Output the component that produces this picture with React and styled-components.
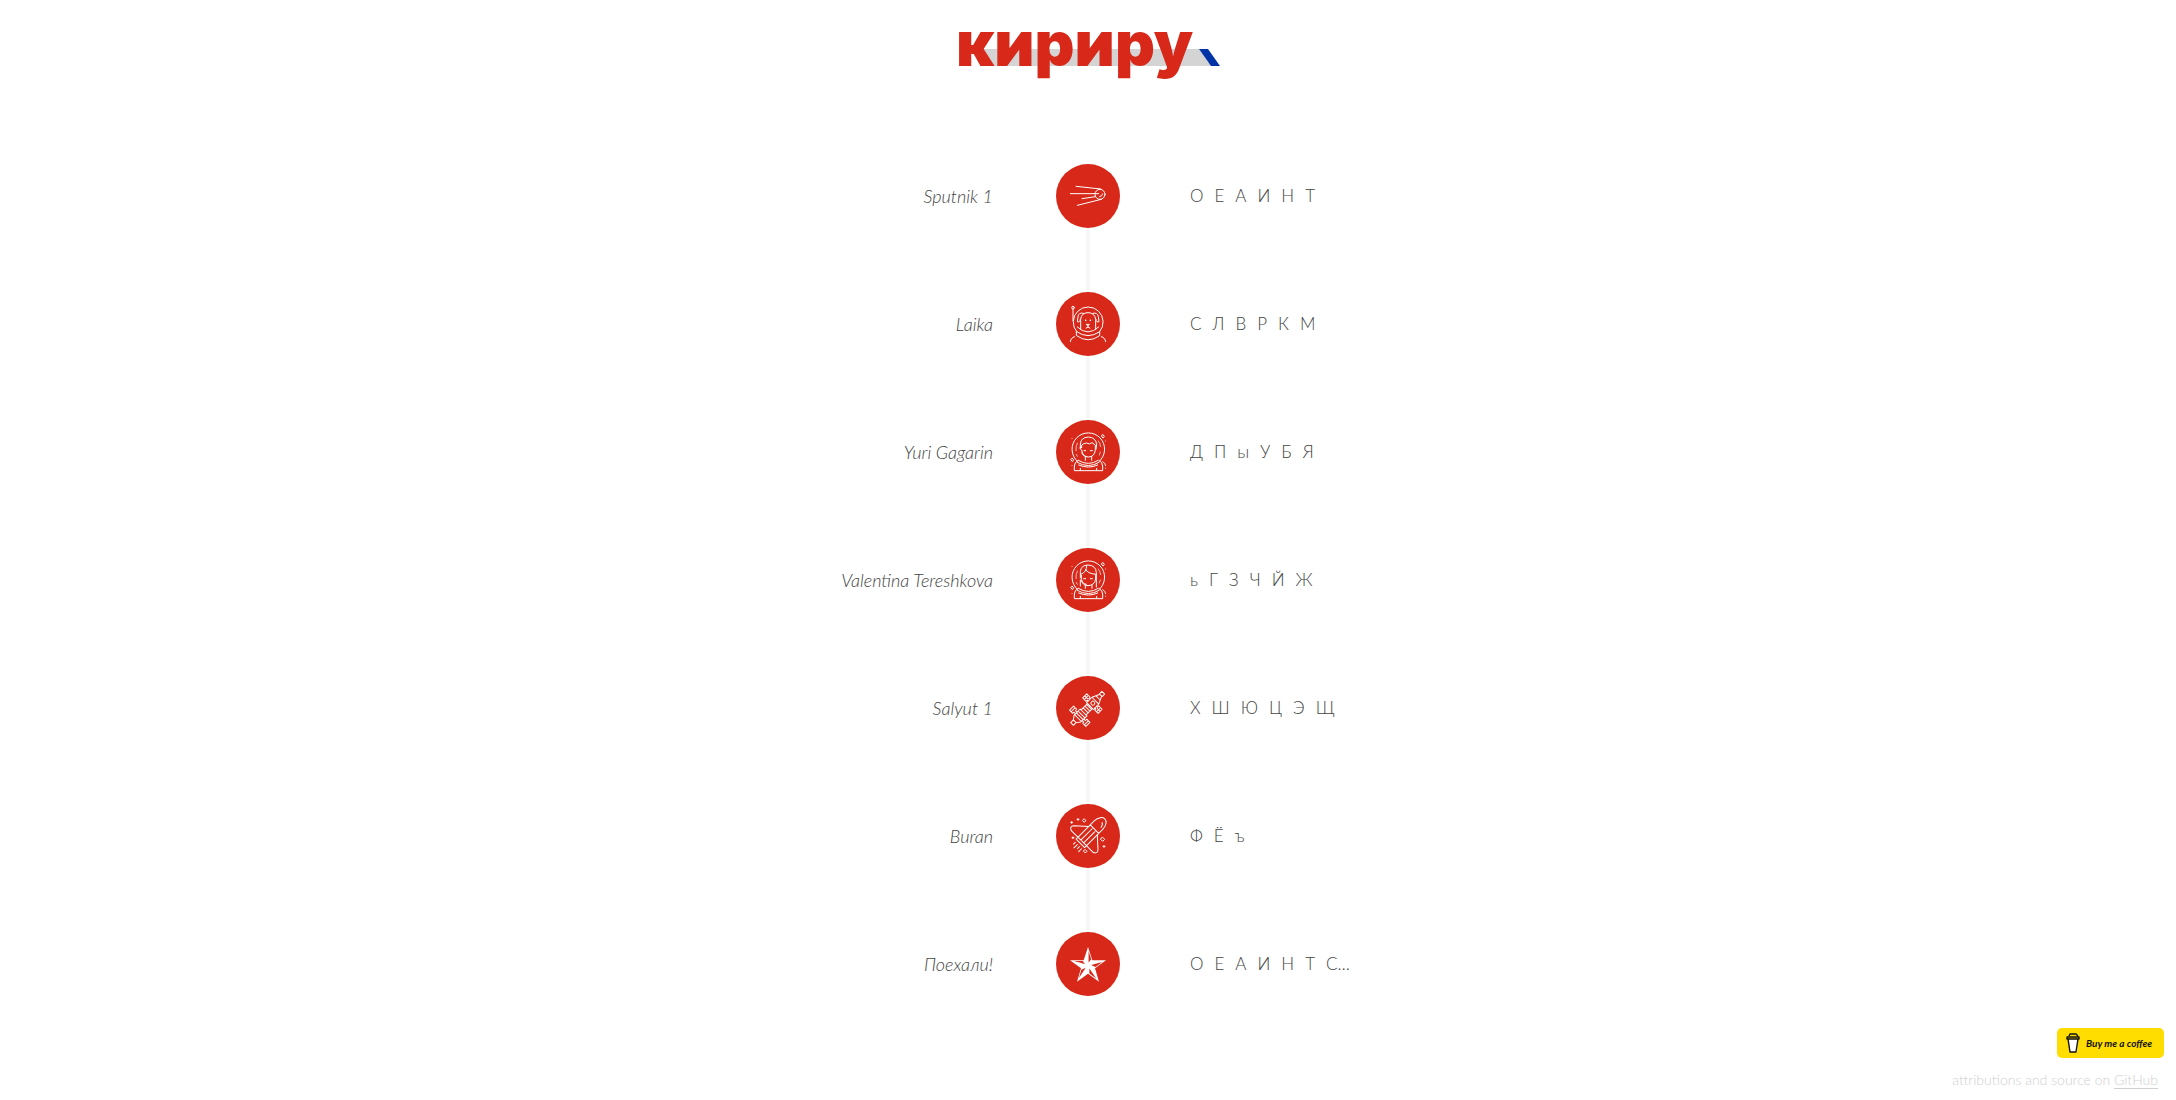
import React from "react";
import styled, { createGlobalStyle } from "styled-components";

const RED = "#d72819";

const GlobalStyle = createGlobalStyle`
  *, *::before, *::after { box-sizing: border-box; }
  body {
    margin: 0;
    background: #fff;
    color: #444;
    font-family: Lato, "Open Sans", sans-serif;
    font-weight: 300;
  }
`;

const Page = styled.div`
  display: flex;
  flex-direction: column;
  min-height: 100vh;
`;

const Header = styled.header`
  display: flex;
  justify-content: center;
  padding: 16px 0 0;
  height: 132px;
`;

const Logo = styled.h1`
  position: relative;
  isolation: isolate;
  margin: 0;
  width: 264px;
  height: 72px;
  color: ${RED};
  font-family: Inter, sans-serif;
  font-size: 62px;
  line-height: 56px;
  font-weight: 900;
`;

const LogoBand = styled.svg`
  position: absolute;
  z-index: -1;
  left: 0;
  top: 33px;
  width: 264px;
  height: 17px;
`;

const Timeline = styled.ol`
  display: flex;
  flex-direction: column;
  gap: 64px;
  margin: 0;
  padding: 32px 0;
  list-style: none;
`;

const Level = styled.li`
  position: relative;
  display: grid;
  grid-template-columns: 1fr 64px 1fr;
  align-items: center;

  &:not(:last-child)::after {
    content: "";
    position: absolute;
    left: calc(50% - 2px);
    top: 64px;
    width: 4px;
    height: 64px;
    background: #f7f7f7;
  }
`;

const Name = styled.a`
  justify-self: end;
  margin-right: 63px;
  color: inherit;
  font-size: 18px;
  line-height: 24px;
  font-style: italic;
  text-decoration: none;
`;

const Badge = styled.div`
  display: grid;
  place-items: center;
  width: 64px;
  height: 64px;
  border-radius: 50%;
  background: ${RED};
`;

const Icon = styled.svg`
  width: 36px;
  height: 36px;
  overflow: visible;
  fill: none;
  stroke: #fff;
  stroke-width: 3;
  stroke-linecap: round;
  stroke-linejoin: round;
`;

const Letters = styled.div`
  display: flex;
  gap: 11px;
  margin-left: 70px;
  font-size: 17px;
  line-height: 24px;
`;

const Footer = styled.footer`
  display: flex;
  flex-direction: column;
  align-items: flex-end;
  gap: 12px;
  padding-right: 12px;
`;

const Coffee = styled.a`
  display: flex;
  align-items: center;
  gap: 6px;
  width: 107px;
  height: 30px;
  padding-left: 9px;
  border-radius: 5px;
  background: #fd0;
  color: #111;
  font-size: 10px;
  font-weight: 700;
  font-style: italic;
  white-space: nowrap;
  text-decoration: none;
`;

const Cup = styled.svg`
  width: 14px;
  height: 20px;
  flex: none;
`;

const Credits = styled.p`
  margin: 0;
  padding-right: 6px;
  color: #d0d0d0;
  font-size: 14px;
  line-height: 20px;

  a { color: inherit; text-underline-offset: 3px; }
`;

const Sputnik = () => (
  <Icon viewBox="60 54 108 108" aria-hidden="true">
    <circle cx="150" cy="103" r="15" />
    <path d="M78 79L152 87M61 101H146M96 116L136 110M82 136L154 118M158 102q-1 7-9 8" />
  </Icon>
);

const Laika = () => (
  <Icon viewBox="60 54 108 108" aria-hidden="true">
    <circle cx="69" cy="59" r="4" />
    <path d="M69 63V98" />
    <path d="M80 131A45 45 0 1 1 149 131" />
    <path d="M82 117q32 30 64 0M80 131q34 24 69 0v12q-35 25-69 0z" />
    <path d="M92 124V94q2-20 22-20t23 20v30M100 76q-14-4-16 10l-2 15q8 4 9-7M129 76q14-4 16 10l2 15q-8 4-9-7" />
    <path d="M107 97h.1M121 97h.1" strokeWidth="5" />
    <path d="M110 109h8l-4 4zM114 113v4M108 120q6-7 12 0" />
    <path d="M61 161q1-12 13-15M167 161q-1-12-13-15" />
  </Icon>
);

const CosmonautSuit = () => (
  <>
    <path d="M82 136A49 49 0 1 1 148 136" />
    <path d="M82 81q-5 10-4 23M145 75q6 7 7 17M79 115l3 6M151 108l-3 9" strokeWidth="2" />
    <path d="M85 133q30 19 60 0M82 139q33 20 65 0M86 147q29 13 57 0" />
    <path d="M83 134q-9 4-10 16v14h85v-14q-1-12-10-16M91 157v7M140 157v7" />
    <path d="M159 56l4 5-4 5-4-5zM67 127l4 5-4 5-4-5z" />
    <path d="M66 67h.1M166 75h.1M66 149h.1M158 137q8 3 9 12M167 157h.1" strokeWidth="2.5" />
  </>
);

const Gagarin = () => (
  <Icon viewBox="60 54 108 108" aria-hidden="true">
    <CosmonautSuit />
    <path d="M91 97V84q2-20 24-21 22 1 25 22l-2 15" />
    <path d="M95 95V87q7-6 15-6 8 6 16-1l10 7v14q-2 22-21 22-18-1-20-21-8-4-4-9l4 2" />
    <path d="M102 104h5M121 104h6M96 109q0 10 13 13M106 123v10M125 122v11" />
  </Icon>
);

const Tereshkova = () => (
  <Icon viewBox="60 54 108 108" aria-hidden="true">
    <CosmonautSuit />
    <path d="M91 101V83q2-20 23-20 24 1 25 23v43M91 108v18" />
    <path d="M110 65q0 20-17 26M107 76q5 13 31 15" />
    <path d="M94 94v13q3 18 20 18 20-1 23-20V94M101 104h6M121 104h6M96 110q1 9 13 11M106 123v10M126 122v11" />
  </Icon>
);

const Salyut = () => (
  <Icon viewBox="60 54 108 108" aria-hidden="true">
    <g transform="translate(115 107) rotate(-45) scale(0.96)">
      <path d="M-72-6h12v12h-12zM-60-6l12-9h27v30h-27l-12-9M-46-15v30M-38-15v30M-30-15v30" />
      <path d="M-21-11H7V11h-28M-12-11V11M-4-11V11M3-11V11" />
      <path d="M7-15h24l24 11v8L31 15H7zM55-6h11v12H55zM31-15v30M43-8v16" />
      <circle cx="20" cy="0" r="6" />
      <path d="M-42-15v-7h-5v-14h18v14h-6v7M-42 15v7h-5v14h18V22h-6v-7M-47-29h18M-47 29h18" />
      <path d="M14-15v-4H9v-15h18v15h-6v4M14 15v4H9v15h18V19h-6v-4M12-27h12M12 27h12M18-33v12M18 21v12" />
    </g>
  </Icon>
);

const Buran = () => (
  <Icon viewBox="60 54 108 108" aria-hidden="true">
    <g transform="translate(115 106) rotate(-45)">
      <path d="M-34-18H44C60-18 70-8 70 0S60 18 44 18H-34zM26-18v36M-26-18v36M-26-6H22M-26 6H22" />
      <path d="M44 10q10-1 12-8" />
      <path d="M20-18L-9-50q-8-8-14-2-4 4-3 12v22M20 18l-29 32q-8 8-14 2-4-4-3-12V18" />
      <path d="M-43-13h-7M-43-4h-14M-43 5h-9M-43 14h-12" />
    </g>
    <path d="M103 57l5 5-5 5-5-5zM158 112l6 6-6 6-6-6zM106 149l5 5-5 5-5-5z" />
    <path d="M65 65v5M62 67h6M84 56v5M81 58h6M69 111v5M66 113h6M162 137v5M159 139h6" />
  </Icon>
);

const STAR_TIPS = [[114, 57], [168, 97], [147, 161], [81, 161], [60, 97]];
const STAR_NOTCHES = [[127, 97], [135, 121], [114, 137], [93, 121], [101, 97]];

const Star = () => (
  <Icon viewBox="60 54 108 108" aria-hidden="true">
    <polygon
      points={STAR_TIPS.flatMap((tip, i) => [tip, STAR_NOTCHES[i]]).join(" ")}
      fill="#fff"
      stroke="none"
    />
    {STAR_TIPS.map((tip, i) => {
      const corners = [tip, STAR_NOTCHES[i], [114, 112]];
      const mid = [0, 1].map((k) => corners.reduce((sum, c) => sum + c[k], 0) / 3);
      const facet = corners.map((c) => c.map((v, k) => mid[k] + (v - mid[k]) * 0.62));
      return <polygon key={i} points={facet.join(" ")} fill={RED} stroke="none" />;
    })}
  </Icon>
);

const LEVELS = [
  { name: "Sputnik 1", icon: Sputnik, letters: "О Е А И Н Т" },
  { name: "Laika", icon: Laika, letters: "С Л В Р К М" },
  { name: "Yuri Gagarin", icon: Gagarin, letters: "Д П ы У Б Я" },
  { name: "Valentina Tereshkova", icon: Tereshkova, letters: "ь Г З Ч Й Ж" },
  { name: "Salyut 1", icon: Salyut, letters: "Х Ш Ю Ц Э Щ" },
  { name: "Buran", icon: Buran, letters: "Ф Ё ъ" },
  { name: "Поехали!", icon: Star, letters: "О Е А И Н Т С…" },
];

export default function App() {
  return (
    <Page>
      <GlobalStyle />
      <Header>
        <Logo>
          кириру
          <LogoBand viewBox="0 0 264 17" aria-hidden="true">
            <path d="M24 0H243L255 17H24z" fill="#d4d4d4" />
            <path d="M243 0h9l12 17h-9z" fill="#0033a5" />
          </LogoBand>
        </Logo>
      </Header>
      <main>
        <Timeline>
          {LEVELS.map(({ name, icon: Drawing, letters }) => (
            <Level key={name}>
              <Name href="#">{name}</Name>
              <Badge>
                <Drawing />
              </Badge>
              <Letters>
                {letters.split(" ").map((letter) => (
                  <span key={letter}>{letter}</span>
                ))}
              </Letters>
            </Level>
          ))}
        </Timeline>
      </main>
      <Footer>
        <Coffee href="#">
          <Cup viewBox="0 0 14 20" aria-hidden="true">
            <path d="M3 6h9l-1 13H4z" fill="#fff" />
            <path
              d="M3 3l1-2h6l2 2M1 4h12v2H1zM2 6l2 13h6l2-13"
              fill="none"
              stroke="#111"
              strokeWidth="1.4"
              strokeLinejoin="round"
            />
          </Cup>
          Buy me a coffee
        </Coffee>
        <Credits>
          attributions and source on <a href="#">GitHub</a>
        </Credits>
      </Footer>
    </Page>
  );
}
